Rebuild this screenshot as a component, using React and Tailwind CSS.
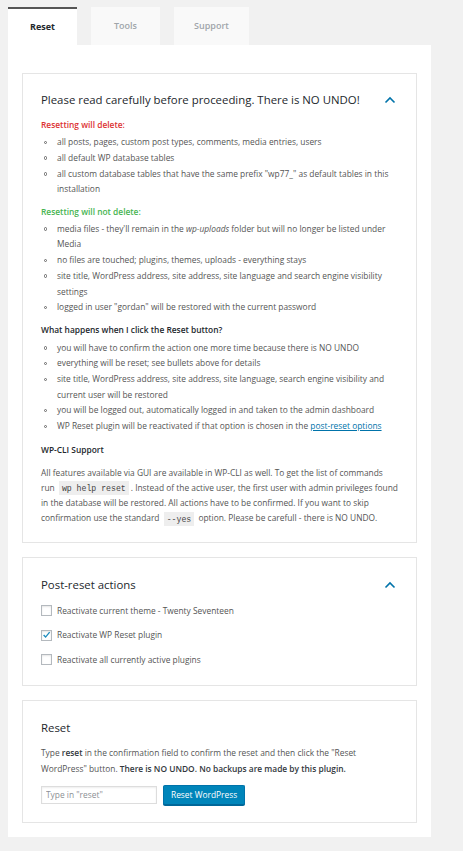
import React from "react";

const Bullet = ({ children }) => (
  <li className="flex">
    <span className="w-[16px] shrink-0 flex justify-start pl-[2.5px] pt-[6.5px]">
      <span className="block w-[3.5px] h-[3.5px] rounded-full border border-[#666]" />
    </span>
    <span className="flex-1">{children}</span>
  </li>
);

const Chevron = () => (
  <svg width="12" height="8" viewBox="0 0 12 8" className="shrink-0">
    <polyline points="1.5,6.5 6,2 10.5,6.5" fill="none" stroke="#0073aa" strokeWidth="1.6" />
  </svg>
);

const Checkbox = ({ checked }) => (
  <span className="w-[11px] h-[11px] border border-[#b4b9be] bg-white shrink-0 flex items-center justify-center shadow-[inset_0_1px_2px_rgba(0,0,0,0.1)]">
    {checked && (
      <svg width="10" height="10" viewBox="0 0 10 10">
        <polyline points="1.8,5 4,7.3 8.5,1.8" fill="none" stroke="#1e8cbe" strokeWidth="1.5" />
      </svg>
    )}
  </span>
);

const Code = ({ children }) => (
  <code className="font-['Liberation_Mono',monospace] text-[8.2px] leading-none bg-[#eeeeee] px-[3px] py-[2.5px] mx-[2px] text-[#444]">
    {children}
  </code>
);

export default function App() {
  return (
    <div className="min-h-[851px] bg-[#f1f1f1] pl-[8px] pr-[32px] pt-[7px] font-['Open_Sans','Noto_Sans',sans-serif] text-[#555]">
      {/* Tabs */}
      <div className="flex gap-[14px] h-[38px]">
        <div className="w-[69px] bg-white border-t-2 border-[#555] flex items-center justify-center text-[9px] font-bold text-[#23282d]">
          Reset
        </div>
        <div className="w-[69px] bg-[#f9f9f9] flex items-center justify-center text-[9px] font-semibold text-[#a0a5aa]">
          Tools
        </div>
        <div className="w-[75px] bg-[#f9f9f9] flex items-center justify-center text-[9px] font-semibold text-[#a0a5aa]">
          Support
        </div>
      </div>

      {/* Panel */}
      <div className="bg-white px-[14px] pt-[28px] pb-[14px] flex flex-col gap-[14px]">
        {/* Card 1 */}
        <div className="border border-[#e5e5e5] pl-[18px] pr-[19px] pt-[18px] pb-[17px] text-[8.4px]">
          <div className="flex items-center justify-between h-[16px] mb-[9px]">
            <h2 className="text-[11.4px] font-medium text-[#23282d] leading-[16px]">
              Please read carefully before proceeding. There is NO UNDO!
            </h2>
            <span className="pr-[1px]"><Chevron /></span>
          </div>
          <div className="leading-[15.7px]">
            <p className="text-[#dc3232] font-semibold mb-[1.5px]">Resetting will delete:</p>
            <ul className="mb-[6.5px]">
              <Bullet>all posts, pages, custom post types, comments, media entries, users</Bullet>
              <Bullet>all default WP database tables</Bullet>
              <Bullet>all custom database tables that have the same prefix "wp77_" as default tables in this installation</Bullet>
            </ul>
            <p className="text-[#46b450] font-semibold mb-[1.5px]">Resetting will not delete:</p>
            <ul className="mb-[6.5px]">
              <Bullet>
                media files - they'll remain in the <i>wp-uploads</i> folder but will no longer be listed under Media
              </Bullet>
              <Bullet>no files are touched; plugins, themes, uploads - everything stays</Bullet>
              <Bullet>site title, WordPress address, site address, site language and search engine visibility settings</Bullet>
              <Bullet>logged in user "gordan" will be restored with the current password</Bullet>
            </ul>
            <p className="text-[#23282d] font-semibold mb-[1.5px] pt-[1px]">What happens when I click the Reset button?</p>
            <ul className="mb-[7px]">
              <Bullet>you will have to confirm the action one more time because there is NO UNDO</Bullet>
              <Bullet>everything will be reset; see bullets above for details</Bullet>
              <Bullet>site title, WordPress address, site address, site language, search engine visibility and current user will be restored</Bullet>
              <Bullet>you will be logged out, automatically logged in and taken to the admin dashboard</Bullet>
              <Bullet>
                WP Reset plugin will be reactivated if that option is chosen in the{" "}
                <a className="text-[#0073aa] underline">post-reset options</a>
              </Bullet>
            </ul>
            <p className="text-[#23282d] font-semibold mb-[7px] pt-[1px]">WP-CLI Support</p>
          </div>
          <p className="leading-[15.2px] mr-[-12px]">
            All features available via GUI are available in WP-CLI as well. To get the list of commands
            <br />
            run <Code>wp help reset</Code>. Instead of the active user, the first user with admin privileges found
            <br />
            in the database will be restored. All actions have to be confirmed. If you want to skip confirmation use the
            standard <Code>--yes</Code> option. Please be carefull - there is NO UNDO.
          </p>
        </div>

        {/* Card 2 */}
        <div className="border border-[#e5e5e5] pl-[18px] pr-[19px] pt-[19px] pb-[18px] text-[8.4px]">
          <div className="flex items-center justify-between h-[16px] mb-[10px]">
            <h2 className="text-[11.4px] font-medium text-[#23282d] leading-[16px]">Post-reset actions</h2>
            <span className="pr-[1px]"><Chevron /></span>
          </div>
          <div className="flex flex-col gap-[9.5px]">
            <label className="flex items-center gap-[5px] h-[15px]">
              <Checkbox />
              <span>Reactivate current theme - Twenty Seventeen</span>
            </label>
            <label className="flex items-center gap-[5px] h-[15px]">
              <Checkbox checked />
              <span>Reactivate WP Reset plugin</span>
            </label>
            <label className="flex items-center gap-[5px] h-[15px]">
              <Checkbox />
              <span>Reactivate all currently active plugins</span>
            </label>
          </div>
        </div>

        {/* Card 3 */}
        <div className="border border-[#e5e5e5] pl-[18px] pr-[19px] pt-[19px] pb-[17px] text-[8.4px]">
          <h2 className="text-[11.4px] font-medium text-[#23282d] leading-[16px] h-[16px] mb-[9px]">Reset</h2>
          <p className="leading-[15.7px] mb-[8px]">
            Type <b className="font-semibold text-[#32373c]">reset</b> in the confirmation field to confirm the reset and then click the "Reset WordPress" button.{" "}
            <b className="font-semibold text-[#32373c]">There is NO UNDO. No backups are made by this plugin.</b>
          </p>
          <div className="flex items-center gap-[6px]">
            <input
              type="text"
              placeholder='Type in "reset"'
              className="w-[116px] h-[18px] border border-[#dddddd] px-[4px] text-[8.4px] leading-[16px] placeholder-[#8c8f94] outline-none shadow-[inset_0_1px_2px_rgba(0,0,0,0.07)]"
            />
            <button className="h-[20px] px-[7px] bg-[#0085ba] border border-[#0073aa] border-b-[#006799] text-white text-[8.4px] leading-[16px] rounded-[2px] shadow-[0_1px_0_#006799]">
              Reset WordPress
            </button>
          </div>
        </div>
      </div>
    </div>
  );
}
